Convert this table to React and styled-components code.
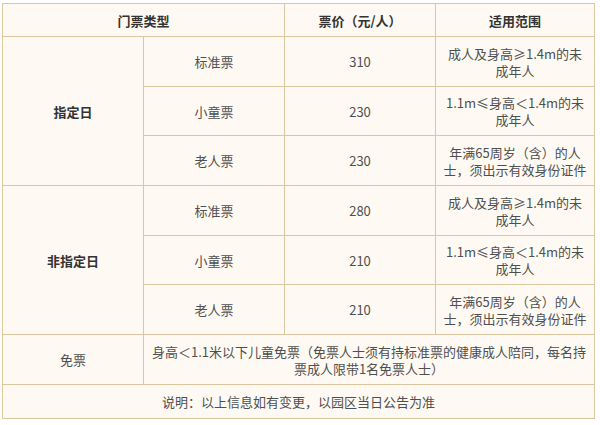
import React from 'react';
import styled, { createGlobalStyle } from 'styled-components';

const GlobalStyle = createGlobalStyle`
  html, body {
    margin: 0;
    padding: 0;
    background: #fff;
  }
  body {
    font-family: "Noto Sans CJK SC", "Noto Sans", sans-serif;
  }
`;

const Page = styled.div`
  padding: 3px 0 0 2px;
`;

const Table = styled.table`
  width: 592px;
  border-collapse: collapse;
  table-layout: fixed;
  background: #fefaf3;
  font-size: 13px;
  color: #555;
`;

const Cell = styled.td`
  border: 1px solid #dcc8a0;
  text-align: center;
  vertical-align: middle;
  padding: 0 2px;
  line-height: 17px;
  white-space: pre-line;
  font-weight: ${props => props.$bold ? 700 : 400};
  color: ${props => props.$bold ? '#333' : '#4f4f4f'};
`;

const HeadCell = styled.th`
  border: 1px solid #dcc8a0;
  text-align: center;
  font-weight: 700;
  color: #333;
  padding: 0;
`;

const Row = styled.tr`
  height: ${props => props.$h}px;
`;

const groups = [
  {
    name: '指定日',
    rows: [
      { type: '标准票', price: 310, scope: '成人及身高≥1.4m的未\n成年人' },
      { type: '小童票', price: 230, scope: '1.1m≤身高＜1.4m的未\n成年人' },
      { type: '老人票', price: 230, scope: '年满65周岁（含）的人\n士，须出示有效身份证件' },
    ],
  },
  {
    name: '非指定日',
    rows: [
      { type: '标准票', price: 280, scope: '成人及身高≥1.4m的未\n成年人' },
      { type: '小童票', price: 210, scope: '1.1m≤身高＜1.4m的未\n成年人' },
      { type: '老人票', price: 210, scope: '年满65周岁（含）的人\n士，须出示有效身份证件' },
    ],
  },
];

export default function App() {
  return (
    <Page>
      <GlobalStyle />
      <Table>
        <colgroup>
          <col style={{ width: 141 }} />
          <col style={{ width: 141 }} />
          <col style={{ width: 151 }} />
          <col style={{ width: 159 }} />
        </colgroup>
        <thead>
          <Row $h={33}>
            <HeadCell colSpan={2}>门票类型</HeadCell>
            <HeadCell>票价（元/人）</HeadCell>
            <HeadCell>适用范围</HeadCell>
          </Row>
        </thead>
        <tbody>
          {groups.map(g =>
            g.rows.map((r, i) => (
              <Row key={g.name + i} $h={i === 1 ? 49 : 50}>
                {i === 0 && <Cell rowSpan={3} $bold>{g.name}</Cell>}
                <Cell>{r.type}</Cell>
                <Cell>{r.price}</Cell>
                <Cell>{r.scope}</Cell>
              </Row>
            ))
          )}
          <Row $h={50}>
            <Cell>免票</Cell>
            <Cell colSpan={3}>
              {'身高＜1.1米以下儿童免票（免票人士须有持标准票的健康成人陪同，每名持\n票成人限带1名免票人士）'}
            </Cell>
          </Row>
          <Row $h={34}>
            <Cell colSpan={4}>说明：以上信息如有变更，以园区当日公告为准</Cell>
          </Row>
        </tbody>
      </Table>
    </Page>
  );
}
